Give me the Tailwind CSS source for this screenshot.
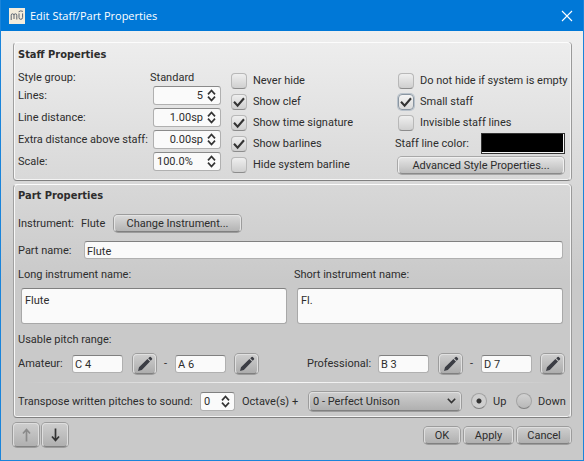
<!DOCTYPE html>
<html lang="en">
<head>
<meta charset="utf-8">
<meta name="viewport" content="width=device-width, initial-scale=1">
<title>Edit Staff/Part Properties</title>
<script src="https://cdn.jsdelivr.net/npm/@tailwindcss/browser@4"></script>
</head>
<body class="font-['Roboto','DejaVu_Sans_Condensed',sans-serif] text-[11px] leading-4 text-[#2d2d2d]">
<svg class="hidden" aria-hidden="true">
  <symbol id="step-up" viewBox="0 0 9 6"><path d="M1 5.3 4.5 1.5 8 5.3" fill="none" stroke="#333" stroke-width="1.7"/></symbol>
  <symbol id="step-down" viewBox="0 0 9 6"><path d="M1 .7 4.5 4.5 8 .7" fill="none" stroke="#333" stroke-width="1.7"/></symbol>
  <symbol id="tick" viewBox="0 0 12 12"><path d="M1 5.8 4.6 9.6 11 2.2" fill="none" stroke="#333" stroke-width="2.1"/></symbol>
  <symbol id="pencil" viewBox="0 0 16 16"><path d="M1 15 2 11.2 10.4 3 13 5.6 4.8 14Z M11.2 2.3 12.6 1Q13.2.6 13.8 1L15 2.2Q15.5 2.9 15 3.5L13.7 4.8Z" fill="#3b3d44"/></symbol>
</svg>
<div class="flex min-h-screen flex-col border border-t-0 border-[#1a84da] bg-[#c9c9c9]">
  <header class="flex h-[31px] shrink-0 items-center bg-[#0078d7] pr-2 pl-2 text-white">
    <svg class="size-4" viewBox="0 0 16 16" aria-hidden="true">
      <rect width="16" height="16" fill="#f3ecdc"/>
      <path d="M2.2 12V7.2Q2.2 5.8 3.5 5.8T5 7.2V11M5 7.2Q5 5.8 6.4 5.8T7.8 7.2V11.5M10 5.4V9.5Q10 11.3 11.8 11.3T13.6 9.5V5.4M9.6 3.8Q11.5 2.2 13.9 3.4" fill="none" stroke="#4b5565" stroke-width=".9"/>
    </svg>
    <h1 class="ml-[5px] flex-1 font-['Open_Sans','Noto_Sans',sans-serif] text-[11px]">Edit Staff/Part Properties</h1>
    <button type="button" aria-label="Close" class="flex size-4 items-center justify-center">
      <svg class="size-3" viewBox="0 0 12 12"><path d="M1 1 11 11M11 1 1 11" stroke="#fff" stroke-width="1.1"/></svg>
    </button>
  </header>

  <main class="flex flex-1 flex-col gap-[3px] bg-[linear-gradient(to_bottom,#efefef_0px,#c9c9c9_250px)] px-3 pt-[11px]">
    <section class="rounded-[4px] border border-t-[#fcfcfc] border-r-[#f4f4f4] border-b-[#808080] border-l-[#a0a0a0] px-[4px] pt-[3px] pb-[5px] shadow-[inset_1px_0_#f8f8f8,inset_0_-1px_#f4f4f4,1px_0_#9a9a9a]">
      <h2 class="h-5 font-['DejaVu_Sans_Condensed','DejaVu_Sans',sans-serif] leading-[18px] font-bold">Staff Properties</h2>
      <div class="flex items-start">
        <div class="grid grid-cols-[135px_68px] items-center">
          <span class="h-[18px] leading-6">Style group:</span><span class="-ml-[3px] h-[18px] leading-6">Standard</span>
          <label for="lines" class="h-[22px] leading-6">Lines:</label>
          <div class="flex h-[19px] items-center rounded-[3px] border border-[#b0b0b0] border-t-[#8a8a8a] bg-[#fafafa] pr-1">
            <input id="lines" value="5" class="w-0 flex-1 bg-transparent pt-px text-right outline-none">
            <span class="ml-1 flex flex-col gap-px"><button type="button" aria-label="Increase"><svg class="block h-[6px] w-[9px]"><use href="#step-up"/></svg></button><button type="button" aria-label="Decrease"><svg class="block h-[6px] w-[9px]"><use href="#step-down"/></svg></button></span>
          </div>
          <label for="dist" class="h-[22px] leading-6">Line distance:</label>
          <div class="flex h-[19px] items-center rounded-[3px] border border-[#b0b0b0] border-t-[#8a8a8a] bg-[#fafafa] pr-1">
            <input id="dist" value="1.00sp" class="w-0 flex-1 bg-transparent pt-px text-right outline-none">
            <span class="ml-1 flex flex-col gap-px"><button type="button" aria-label="Increase"><svg class="block h-[6px] w-[9px]"><use href="#step-up"/></svg></button><button type="button" aria-label="Decrease"><svg class="block h-[6px] w-[9px]"><use href="#step-down"/></svg></button></span>
          </div>
          <label for="extra" class="h-[22px] leading-6 whitespace-nowrap">Extra distance above staff:</label>
          <div class="flex h-[19px] items-center rounded-[3px] border border-[#b0b0b0] border-t-[#8a8a8a] bg-[#fafafa] pr-1">
            <input id="extra" value="0.00sp" class="w-0 flex-1 bg-transparent pt-px text-right outline-none">
            <span class="ml-1 flex flex-col gap-px"><button type="button" aria-label="Increase"><svg class="block h-[6px] w-[9px]"><use href="#step-up"/></svg></button><button type="button" aria-label="Decrease"><svg class="block h-[6px] w-[9px]"><use href="#step-down"/></svg></button></span>
          </div>
          <label for="scale" class="h-[22px] leading-6">Scale:</label>
          <div class="flex h-[19px] items-center rounded-[3px] border border-[#b0b0b0] border-t-[#8a8a8a] bg-[#fafafa] pr-1 pl-[3px]">
            <input id="scale" value="100.0%" class="w-0 flex-1 bg-transparent pt-px outline-none">
            <span class="ml-1 flex flex-col gap-px"><button type="button" aria-label="Increase"><svg class="block h-[6px] w-[9px]"><use href="#step-up"/></svg></button><button type="button" aria-label="Decrease"><svg class="block h-[6px] w-[9px]"><use href="#step-down"/></svg></button></span>
          </div>
        </div>

        <div class="ml-[10px] flex flex-1 flex-col pt-1">
          <label class="flex h-[21px] items-center gap-[6px]"><span class="grid size-4"><input type="checkbox" class="peer col-start-1 row-start-1 size-4 appearance-none rounded-[4px] border border-[#b8b8b8] border-b-[#8c8c8c] bg-linear-to-b from-[#efefef] to-[#cfcfcf]"><svg class="col-start-1 row-start-1 hidden size-3 place-self-center peer-checked:block"><use href="#tick"/></svg></span><span class="pt-px">Never hide</span></label>
          <label class="flex h-[21px] items-center gap-[6px]"><span class="grid size-4"><input type="checkbox" checked class="peer col-start-1 row-start-1 size-4 appearance-none rounded-[4px] border border-[#b8b8b8] border-b-[#8c8c8c] bg-linear-to-b from-[#efefef] to-[#cfcfcf]"><svg class="col-start-1 row-start-1 hidden size-3 place-self-center peer-checked:block"><use href="#tick"/></svg></span><span class="pt-px">Show clef</span></label>
          <label class="flex h-[21px] items-center gap-[6px]"><span class="grid size-4"><input type="checkbox" checked class="peer col-start-1 row-start-1 size-4 appearance-none rounded-[4px] border border-[#b8b8b8] border-b-[#8c8c8c] bg-linear-to-b from-[#efefef] to-[#cfcfcf]"><svg class="col-start-1 row-start-1 hidden size-3 place-self-center peer-checked:block"><use href="#tick"/></svg></span><span class="pt-px">Show time signature</span></label>
          <label class="flex h-[21px] items-center gap-[6px]"><span class="grid size-4"><input type="checkbox" checked class="peer col-start-1 row-start-1 size-4 appearance-none rounded-[4px] border border-[#b8b8b8] border-b-[#8c8c8c] bg-linear-to-b from-[#efefef] to-[#cfcfcf]"><svg class="col-start-1 row-start-1 hidden size-3 place-self-center peer-checked:block"><use href="#tick"/></svg></span><span class="pt-px">Show barlines</span></label>
          <label class="flex h-[21px] items-center gap-[6px]"><span class="grid size-4"><input type="checkbox" class="peer col-start-1 row-start-1 size-4 appearance-none rounded-[4px] border border-[#b8b8b8] border-b-[#8c8c8c] bg-linear-to-b from-[#efefef] to-[#cfcfcf]"><svg class="col-start-1 row-start-1 hidden size-3 place-self-center peer-checked:block"><use href="#tick"/></svg></span><span class="pt-px">Hide system barline</span></label>
        </div>

        <div class="flex w-[171px] flex-col pt-1 pr-px">
          <label class="ml-[3px] flex h-[21px] items-center gap-[6px] whitespace-nowrap"><span class="grid size-4"><input type="checkbox" class="peer col-start-1 row-start-1 size-4 appearance-none rounded-[4px] border border-[#b8b8b8] border-b-[#8c8c8c] bg-linear-to-b from-[#efefef] to-[#cfcfcf]"><svg class="col-start-1 row-start-1 hidden size-3 place-self-center peer-checked:block"><use href="#tick"/></svg></span><span class="pt-px">Do not hide if system is empty</span></label>
          <label class="ml-[3px] flex h-[21px] items-center gap-[6px]"><span class="grid size-4"><input type="checkbox" checked class="peer col-start-1 row-start-1 size-4 appearance-none rounded-[4px] border border-[#8a96a2] bg-linear-to-b from-[#f4f4f4] to-[#dadada] ring-1 ring-[#b9c2cb]"><svg class="col-start-1 row-start-1 hidden size-3 place-self-center peer-checked:block"><use href="#tick"/></svg></span><span class="pt-px">Small staff</span></label>
          <label class="ml-[3px] flex h-[21px] items-center gap-[6px]"><span class="grid size-4"><input type="checkbox" class="peer col-start-1 row-start-1 size-4 appearance-none rounded-[4px] border border-[#b8b8b8] border-b-[#8c8c8c] bg-linear-to-b from-[#efefef] to-[#cfcfcf]"><svg class="col-start-1 row-start-1 hidden size-3 place-self-center peer-checked:block"><use href="#tick"/></svg></span><span class="pt-px">Invisible staff lines</span></label>
          <div class="flex h-[21px] items-center justify-between"><span class="pt-px">Staff line color:</span><button type="button" aria-label="Staff line color" class="h-[21px] w-[84px] border border-[#333] bg-black shadow-[inset_-1px_-1px_#f4f4f4]"></button></div>
          <button type="button" class="mt-[3px] mr-px ml-[3px] h-[17px] rounded-[4px] border border-[#f0f0f0] border-b-[#8a8a8a] bg-linear-to-b from-[#e4e4e4] to-[#bcbcbc] shadow-[0_0_0_1px_#a8a8a8]">Advanced Style Properties...</button>
        </div>
      </div>
    </section>

    <section class="rounded-[4px] border border-t-[#fcfcfc] border-r-[#f4f4f4] border-b-[#808080] border-l-[#a0a0a0] px-[4px] pt-[3px] pb-[6px] shadow-[inset_1px_0_#f8f8f8,inset_0_-1px_#f4f4f4,1px_0_#9a9a9a]">
      <h2 class="font-['DejaVu_Sans_Condensed','DejaVu_Sans',sans-serif] font-bold">Part Properties</h2>
      <div class="mt-[10px] flex h-[18px] items-center"><span class="w-[63px] pt-px">Instrument:</span><span class="w-[33px] pt-px">Flute</span>
        <button type="button" class="h-[17px] w-[127px] rounded-[4px] border border-[#e4e4e4] border-b-[#808080] bg-linear-to-b from-[#d8d8d8] to-[#b4b4b4] shadow-[0_0_0_1px_#9c9c9c]">Change Instrument...</button>
      </div>
      <div class="mt-[9px] mr-[3px] flex items-center"><label for="part" class="w-[66px] pt-[2px]">Part name:</label>
        <input id="part" value="Flute" class="h-[18px] w-0 flex-1 rounded-[3px] border border-[#b0b0b0] border-t-[#808080] bg-[#fafafa] px-[2px] pt-[2px] outline-none">
      </div>
      <div class="mt-[7px] mr-[3px] grid grid-cols-2 gap-x-[7px]">
        <label for="long" class="pt-px">Long instrument name:</label><label for="short" class="pt-px">Short instrument name:</label>
        <textarea id="long" class="mt-[5px] ml-[3px] h-9 resize-none rounded-[3px] border border-[#a8a8a8] border-t-[#808080] bg-[#fafafa] px-[3px] pt-[4px] outline-none">Flute</textarea>
        <textarea id="short" class="mt-[5px] ml-[3px] h-9 resize-none rounded-[3px] border border-[#a8a8a8] border-t-[#808080] bg-[#fafafa] px-[3px] pt-[4px] outline-none">Fl.</textarea>
      </div>
      <h3 class="mt-[8px]">Usable pitch range:</h3>
      <div class="mt-[5px] mr-[2px] flex justify-between">
        <div class="flex h-[21px] items-center"><label for="am1" class="w-[54px] pt-px">Amateur:</label>
          <input id="am1" value="C 4" class="h-[18px] w-[51px] rounded-[3px] border border-[#b0b0b0] border-t-[#808080] bg-[#fafafa] px-[2px] pt-px outline-none">
          <button type="button" aria-label="Edit amateur low pitch" class="ml-[10px] flex h-5 w-[23px] items-center justify-center rounded-[4px] border border-[#e0e0e0] border-b-[#808080] bg-linear-to-b from-[#cdcdcd] to-[#adadad] shadow-[0_0_0_1px_#9c9c9c]"><svg class="size-4"><use href="#pencil"/></svg></button>
          <span class="w-[19px] text-center">-</span>
          <input aria-label="Amateur high pitch" value="A 6" class="h-[18px] w-[51px] rounded-[3px] border border-[#b0b0b0] border-t-[#808080] bg-[#fafafa] px-[2px] pt-px outline-none">
          <button type="button" aria-label="Edit amateur high pitch" class="ml-[9px] flex h-5 w-[23px] items-center justify-center rounded-[4px] border border-[#e0e0e0] border-b-[#808080] bg-linear-to-b from-[#cdcdcd] to-[#adadad] shadow-[0_0_0_1px_#9c9c9c]"><svg class="size-4"><use href="#pencil"/></svg></button>
        </div>
        <div class="flex h-[21px] items-center"><label for="pr1" class="w-[71px] pt-px">Professional:</label>
          <input id="pr1" value="B 3" class="h-[18px] w-[51px] rounded-[3px] border border-[#b0b0b0] border-t-[#808080] bg-[#fafafa] px-[2px] pt-px outline-none">
          <button type="button" aria-label="Edit professional low pitch" class="ml-[10px] flex h-5 w-[23px] items-center justify-center rounded-[4px] border border-[#e0e0e0] border-b-[#808080] bg-linear-to-b from-[#cdcdcd] to-[#adadad] shadow-[0_0_0_1px_#9c9c9c]"><svg class="size-4"><use href="#pencil"/></svg></button>
          <span class="w-[19px] text-center">-</span>
          <input aria-label="Professional high pitch" value="D 7" class="h-[18px] w-[51px] rounded-[3px] border border-[#b0b0b0] border-t-[#808080] bg-[#fafafa] px-[2px] pt-px outline-none">
          <button type="button" aria-label="Edit professional high pitch" class="ml-[9px] flex h-5 w-[23px] items-center justify-center rounded-[4px] border border-[#e0e0e0] border-b-[#808080] bg-linear-to-b from-[#cdcdcd] to-[#adadad] shadow-[0_0_0_1px_#9c9c9c]"><svg class="size-4"><use href="#pencil"/></svg></button>
        </div>
      </div>
      <hr class="mx-1 mt-[8px] h-px border-0 bg-linear-to-r from-transparent via-[#f8f8f8] to-transparent">
      <div class="mt-[8px] flex h-5 items-center whitespace-nowrap">
        <label for="oct" class="w-[182px] pt-[2px]">Transpose written pitches to sound:</label>
        <div class="flex h-[19px] w-[35px] items-center rounded-[3px] border border-[#b0b0b0] border-t-[#808080] bg-[#fafafa] pr-1 pl-[3px]">
          <input id="oct" value="0" class="w-0 flex-1 bg-transparent pt-[2px] outline-none">
          <span class="flex flex-col gap-px"><button type="button" aria-label="Increase"><svg class="block h-[6px] w-[9px]"><use href="#step-up"/></svg></button><button type="button" aria-label="Decrease"><svg class="block h-[6px] w-[9px]"><use href="#step-down"/></svg></button></span>
        </div>
        <label for="interval" class="ml-[7px] w-[67px] pt-[2px]">Octave(s) +</label>
        <div class="grid w-[152px] grow">
          <select id="interval" class="col-start-1 row-start-1 h-[19px] w-full appearance-none rounded-[4px] border border-[#e0e0e0] border-b-[#808080] bg-linear-to-b from-[#cdcdcd] to-[#b0b0b0] pt-px pl-[3px] shadow-[0_0_0_1px_#9c9c9c]"><option>0 - Perfect Unison</option></select>
          <svg class="pointer-events-none col-start-1 row-start-1 mr-[5px] h-[6px] w-[9px] self-center justify-self-end" viewBox="0 0 9 6"><path d="M.8 .8 4.5 4.6 8.2 .8" fill="none" stroke="#333" stroke-width="1.6"/></svg>
        </div>
        <label class="ml-[10px] flex w-9 items-center gap-[6px]"><input type="radio" name="dir" checked class="size-4 appearance-none rounded-full border border-[#a4a4a4] border-b-[#808080] bg-[radial-gradient(circle,#333_2px,#cfcfcf_3px)]"><span class="pt-px">Up</span></label>
        <label class="ml-[9px] flex w-[50px] items-center gap-[6px]"><input type="radio" name="dir" class="size-4 appearance-none rounded-full border border-[#a4a4a4] border-b-[#808080] bg-linear-to-b from-[#d2d2d2] to-[#b8b8b8]"><span class="pt-px">Down</span></label>
      </div>
    </section>

    <footer class="mt-[2px] flex items-center justify-between">
      <div class="flex gap-[3px]">
        <button type="button" disabled aria-label="Previous staff" class="flex h-6 w-[26px] items-center justify-center rounded-[4px] border border-[#dedede] border-b-[#808080] bg-linear-to-b from-[#cdcdcd] to-[#b0b0b0] shadow-[0_0_0_1px_#9c9c9c]"><svg class="h-[14px] w-[9px]" viewBox="0 0 9 14"><path d="M4.5 13.5V2M1 5.5 4.5 1.5 8 5.5" fill="none" stroke="#8a8a8a" stroke-width="1.7"/></svg></button>
        <button type="button" aria-label="Next staff" class="flex h-6 w-[26px] items-center justify-center rounded-[4px] border border-[#dedede] border-b-[#808080] bg-linear-to-b from-[#cdcdcd] to-[#b0b0b0] shadow-[0_0_0_1px_#9c9c9c]"><svg class="h-[14px] w-[9px]" viewBox="0 0 9 14"><path d="M4.5 .5V12M1 8.5 4.5 12.5 8 8.5" fill="none" stroke="#333" stroke-width="1.7"/></svg></button>
      </div>
      <div class="flex gap-[4px]">
        <button type="button" class="h-[17px] w-9 rounded-[4px] border border-[#dedede] border-b-[#808080] bg-linear-to-b from-[#cdcdcd] to-[#b0b0b0] shadow-[0_0_0_1px_#9c9c9c]">OK</button>
        <button type="button" class="h-[17px] w-[49px] rounded-[4px] border border-[#dedede] border-b-[#808080] bg-linear-to-b from-[#cdcdcd] to-[#b0b0b0] shadow-[0_0_0_1px_#9c9c9c]">Apply</button>
        <button type="button" class="h-[17px] w-[54px] rounded-[4px] border border-[#dedede] border-b-[#808080] bg-linear-to-b from-[#cdcdcd] to-[#b0b0b0] shadow-[0_0_0_1px_#9c9c9c]">Cancel</button>
      </div>
    </footer>
  </main>
</div>
</body>
</html>
